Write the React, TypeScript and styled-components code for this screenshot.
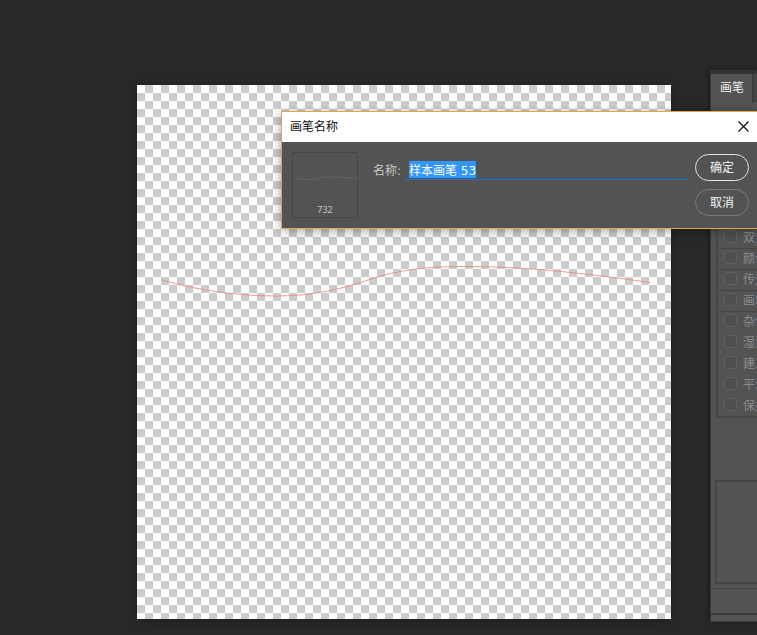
import React, { useEffect, useRef } from "react";
import styled, { createGlobalStyle } from "styled-components";

const GlobalStyle = createGlobalStyle`
  *, *::before, *::after { box-sizing: border-box; }
  body {
    margin: 0;
    background: #282828;
    font: 12px/14px "DejaVu Sans", "Noto Sans CJK SC", sans-serif;
  }
`;

const Workspace = styled.main`
  position: relative;
  display: flex;
  align-items: flex-start;
  min-height: 100vh;
  overflow: hidden;
  background: #282828;
`;

const DocumentArea = styled.section`
  flex: 1;
  min-width: 0;
  padding: 85px 39px 16px 137px;
`;

const Canvas = styled.div`
  aspect-ratio: 1;
  background: repeating-conic-gradient(#ccc 0 25%, #fff 0 50%) 0 0 / 16px 16px;
  box-shadow: 0 2px 8px rgba(0, 0, 0, 0.25);

  svg {
    display: block;
    width: 100%;
    height: 100%;
  }
`;

const PanelDock = styled.aside`
  flex: 0 0 47px;
  margin-top: 70px;
  overflow: hidden;
  border-left: 1px solid #3b3b3b;
  box-shadow: -1px 0 4px rgba(0, 0, 0, 0.4);
`;

const Panel = styled.div`
  width: 240px;
  background: #535353;
  border-top: 4px solid #343434;
  border-bottom: 1px solid #3b3b3b;
`;

const TabStrip = styled.div`
  display: flex;
  height: 28px;
  background: #434343;
  border-bottom: 1px solid #3b3b3b;
`;

const Tab = styled.button`
  height: 28px;
  padding: 0 8px 0 9px;
  border: 0;
  border-right: 1px solid #383838;
  background: #535353;
  color: #f0f0f0;
  font: inherit;
`;

const OptionList = styled.div`
  margin: 39px 8px 0 5px;
  border: 2px solid #474747;
`;

const Option = styled.label<{ $divided?: boolean }>`
  display: flex;
  align-items: center;
  gap: 6px;
  height: 21px;
  padding-left: 6px;
  border-top: 1px solid ${({ $divided }) => ($divided ? "#454545" : "transparent")};
  color: #8c8c8c;
  line-height: 18px;
  white-space: nowrap;
`;

const Checkbox = styled.input`
  appearance: none;
  width: 13px;
  height: 13px;
  margin: 0 0 3px;
  border: 1px solid #606060;
  border-radius: 3px;
  background: #4f4f4f;
`;

const StrokePreview = styled.div`
  height: 104px;
  margin: 62px 8px 4px 4px;
  border: 2px solid #454545;
`;

const PanelFooter = styled.div`
  height: 27px;
  border-top: 1px solid #474747;
  border-bottom: 2px solid #383838;
`;

const PanelGrip = styled.div`
  height: 6px;
`;

const Dialog = styled.form`
  position: absolute;
  top: 111px;
  left: 281px;
  right: -1px;
  border: 1px solid #e2a458;
  background: #535353;
  box-shadow: 0 2px 10px rgba(0, 0, 0, 0.35);
`;

const TitleBar = styled.header`
  display: flex;
  align-items: center;
  justify-content: space-between;
  height: 30px;
  padding: 0 8px;
  background: #fff;
  color: #111;
`;

const Title = styled.h1`
  margin: 0;
  font: inherit;
`;

const CloseButton = styled.button`
  display: flex;
  padding: 0 0 2px;
  border: 0;
  background: none;
  color: #111;
`;

const DialogBody = styled.div`
  display: flex;
  align-items: flex-start;
  padding: 10px 8px 10px 10px;
`;

const BrushThumb = styled.div`
  flex: none;
  width: 66px;
  height: 66px;
  border: 1px solid #464646;
  color: #c4c4c4;
  font: 9px/14px "Noto Sans", sans-serif;
  text-align: center;

  svg {
    display: block;
    height: 50px;
  }
`;

const NameField = styled.label`
  display: flex;
  flex: 1;
  gap: 4px;
  margin: 8px 8px 0 15px;
  color: #c8c8c8;
  line-height: 22px;
`;

const NameInput = styled.input`
  flex: 1;
  min-width: 0;
  height: 20px;
  padding: 0 4px;
  border: 0;
  border-bottom: 1px solid #1c72d8;
  outline: 0;
  background: none;
  color: #fff;
  font: inherit;
  line-height: 14px;

  &::selection {
    background: #3297fd;
    color: #fff;
  }
`;

const Actions = styled.div`
  display: flex;
  flex-direction: column;
  gap: 8px;
  padding-top: 2px;
`;

const PillButton = styled.button<{ $primary?: boolean }>`
  width: 54px;
  height: 27px;
  padding: 0;
  border: 1px solid ${({ $primary }) => ($primary ? "#e4e4e4" : "#7b7b7b")};
  border-radius: 14px;
  background: none;
  color: #f4f4f4;
  font: inherit;
`;

const brushOptions = [
  { name: "形状动态", divided: true },
  { name: "散布", divided: true },
  { name: "纹理", divided: true },
  { name: "双重画笔", divided: true },
  { name: "颜色动态", divided: true },
  { name: "传递", divided: true },
  { name: "画笔笔势", divided: true },
  { name: "杂色", divided: true },
  { name: "湿边", divided: false },
  { name: "建立", divided: false },
  { name: "平滑", divided: false },
  { name: "保护纹理", divided: false },
];

function BrushNameDialog() {
  const nameRef = useRef<HTMLInputElement>(null);

  useEffect(() => {
    nameRef.current?.focus();
    nameRef.current?.select();
  }, []);

  return (
    <Dialog role="dialog" aria-labelledby="dialog-title" onSubmit={(e) => e.preventDefault()}>
      <TitleBar>
        <Title id="dialog-title">画笔名称</Title>
        <CloseButton type="button" aria-label="关闭">
          <svg width="11" height="11" viewBox="0 0 11 11" fill="none" stroke="currentColor" strokeWidth="1.2">
            <path d="M.5.5l10 10M10.5.5l-10 10" />
          </svg>
        </CloseButton>
      </TitleBar>
      <DialogBody>
        <BrushThumb>
          <svg viewBox="0 0 64 50" fill="none" stroke="#646464">
            <path d="M0 25C5 26 8 26.5 14 26.5C26 26.5 25 24 37 24C47 24 55 24.500 64 26" />
          </svg>
          732
        </BrushThumb>
        <NameField>
          名称:
          <NameInput ref={nameRef} type="text" defaultValue="样本画笔 53" />
        </NameField>
        <Actions>
          <PillButton type="submit" $primary>
            确定
          </PillButton>
          <PillButton type="button">取消</PillButton>
        </Actions>
      </DialogBody>
    </Dialog>
  );
}

export default function App() {
  return (
    <>
      <GlobalStyle />
      <Workspace>
        <DocumentArea>
          <Canvas>
            <svg viewBox="0 0 534 534" fill="none" stroke="#ef8376" strokeOpacity="0.8">
              <path d="M25 195C63 206 103 211 140 211C178 211 208 203 231 195C263 184 293 181.500 328 181.500C393 181.500 453 189 513 197.500" />
            </svg>
          </Canvas>
        </DocumentArea>
        <PanelDock>
          <Panel>
            <TabStrip>
              <Tab type="button">画笔</Tab>
            </TabStrip>
            <OptionList>
              <Option as="div">画笔笔尖形状</Option>
              {brushOptions.map(({ name, divided }) => (
                <Option key={name} $divided={divided}>
                  <Checkbox type="checkbox" />
                  {name}
                </Option>
              ))}
            </OptionList>
            <StrokePreview />
            <PanelFooter />
            <PanelGrip />
          </Panel>
        </PanelDock>
        <BrushNameDialog />
      </Workspace>
    </>
  );
}
